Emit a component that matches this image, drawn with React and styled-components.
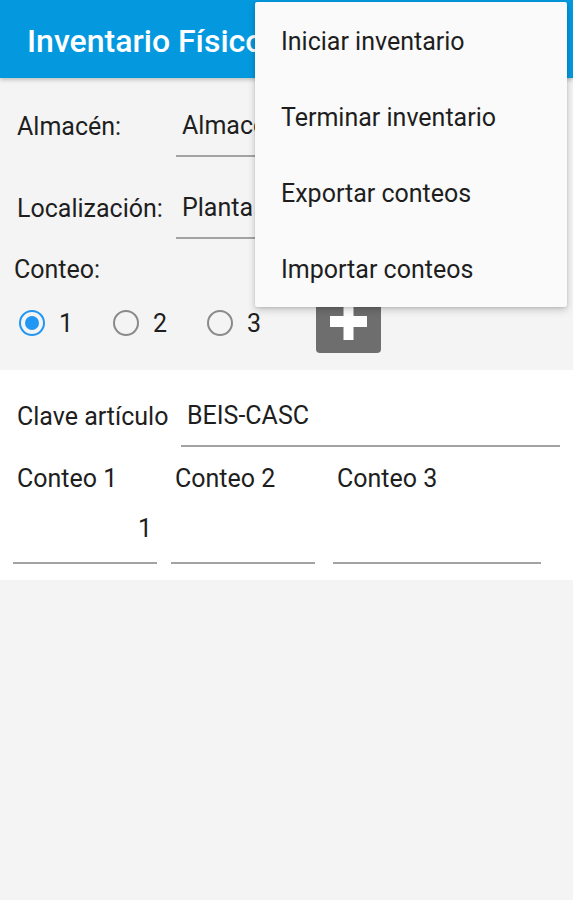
import React from "react";
import styled, { createGlobalStyle } from "styled-components";

const Global = createGlobalStyle`
  html, body { margin: 0; padding: 0; background: #f4f4f4; }
  body { font-family: Roboto, "Noto Sans", sans-serif; -webkit-font-smoothing: antialiased; }
  * { box-sizing: border-box; }
`;

const Screen = styled.div`
  position: relative;
  width: 573px;
  height: 900px;
  background: #f4f4f4;
  overflow: hidden;
`;

const AppBar = styled.header`
  height: 78px;
  background: #0499df;
  display: flex;
  align-items: center;
  padding: 4px 0 0 27px;
  box-shadow: 0 2px 4px rgba(0, 0, 0, 0.22);
  position: relative;
  z-index: 1;
`;

const Title = styled.h1`
  margin: 0;
  color: #fff;
  font-size: 32px;
  font-weight: 500;
  white-space: nowrap;
`;

const Form = styled.section`
  padding-top: 22px;
  height: 292px;
`;

const Row = styled.div`
  display: grid;
  grid-template-columns: ${(p) => p.$labelWidth}px ${(p) => p.$fieldWidth}px;
  padding-left: ${(p) => p.$left}px;
  margin-bottom: ${(p) => p.$gap || 0}px;
`;

const Label = styled.div`
  height: 57px;
  padding-bottom: 5px;
  display: flex;
  align-items: center;
  font-size: 25px;
  color: #1e1e1e;
  white-space: nowrap;
`;

const Field = styled.div`
  height: 57px;
  padding: 0 0 5px 6px;
  display: flex;
  align-items: center;
  font-size: 25px;
  color: #1e1e1e;
  border-bottom: 2px solid #a3a3a3;
  white-space: nowrap;
  overflow: hidden;
`;

const SectionLabel = styled.div`
  padding-left: 14px;
  margin-top: 16px;
  font-size: 25px;
  color: #1e1e1e;
  line-height: 30px;
`;

const RadioRow = styled.div`
  display: flex;
  align-items: center;
  padding-left: 19px;
  height: 76px;
`;

const RadioItem = styled.label`
  display: flex;
  align-items: center;
  gap: 14px;
  width: 94px;
  font-size: 25px;
  color: #1e1e1e;
`;

const RadioCircle = styled.span`
  width: 26px;
  height: 26px;
  border-radius: 50%;
  border: 2px solid ${(p) => (p.$checked ? "#2196f3" : "#8a8a8a")};
  display: flex;
  align-items: center;
  justify-content: center;
  &::after {
    content: "";
    width: 14px;
    height: 14px;
    border-radius: 50%;
    background: ${(p) => (p.$checked ? "#2196f3" : "transparent")};
  }
`;

const AddButton = styled.button`
  margin: -4px 0 0 15px;
  width: 65px;
  height: 64px;
  border: none;
  border-radius: 4px;
  background: #6e6e6e;
  display: flex;
  align-items: center;
  justify-content: center;
  padding: 0;
`;

const Card = styled.section`
  background: #fff;
  height: 210px;
  padding-top: 20px;
`;

const CountLabels = styled.div`
  display: grid;
  grid-template-columns: 158px 162px auto;
  padding-left: 17px;
  margin-top: 17px;
  font-size: 25px;
  color: #1e1e1e;
  line-height: 30px;
`;

const CountInputs = styled.div`
  display: flex;
  padding-left: 13px;
`;

const CountInput = styled.div`
  width: ${(p) => p.$w}px;
  margin-right: ${(p) => p.$mr || 0}px;
  height: 70px;
  padding: 0 5px 18px 0;
  display: flex;
  align-items: flex-end;
  justify-content: flex-end;
  font-size: 25px;
  line-height: 30px;
  color: #1e1e1e;
  border-bottom: 2px solid #a3a3a3;
`;

const Menu = styled.ul`
  position: absolute;
  top: 2px;
  left: 255px;
  width: 312px;
  height: 305px;
  margin: 0;
  padding: 1px 0 0;
  list-style: none;
  background: #fafafa;
  border-radius: 2px;
  box-shadow: 0 3px 8px rgba(0, 0, 0, 0.18), 0 1px 3px rgba(0, 0, 0, 0.12);
  z-index: 5;
`;

const MenuItem = styled.li`
  height: 76px;
  display: flex;
  align-items: center;
  padding-left: 26px;
  font-size: 25px;
  color: #1e1e1e;
  white-space: nowrap;
`;

export default function App() {
  return (
    <>
      <Global />
      <Screen>
        <AppBar>
          <Title>Inventario Físico</Title>
        </AppBar>
        <Form>
          <Row $left={17} $labelWidth={159} $fieldWidth={300} $gap={25}>
            <Label>Almacén:</Label>
            <Field>Almacén General</Field>
          </Row>
          <Row $left={17} $labelWidth={159} $fieldWidth={300}>
            <Label>Localización:</Label>
            <Field>Planta Baja</Field>
          </Row>
          <SectionLabel>Conteo:</SectionLabel>
          <RadioRow>
            <RadioItem>
              <RadioCircle $checked />1
            </RadioItem>
            <RadioItem>
              <RadioCircle />2
            </RadioItem>
            <RadioItem>
              <RadioCircle />3
            </RadioItem>
            <AddButton aria-label="Agregar">
              <svg width="37" height="37" viewBox="0 0 37 37">
                <path d="M13.5 0h10v13h13.5v11H23.5v13h-10V24H0V13h13.5z" fill="#fff" />
              </svg>
            </AddButton>
          </RadioRow>
        </Form>
        <Card>
          <Row $left={17} $labelWidth={164} $fieldWidth={379}>
            <Label>Clave artículo</Label>
            <Field>BEIS-CASC</Field>
          </Row>
          <CountLabels>
            <span>Conteo 1</span>
            <span>Conteo 2</span>
            <span>Conteo 3</span>
          </CountLabels>
          <CountInputs>
            <CountInput $w={144} $mr={14}>1</CountInput>
            <CountInput $w={144} $mr={18} />
            <CountInput $w={208} />
          </CountInputs>
        </Card>
        <Menu>
          <MenuItem>Iniciar inventario</MenuItem>
          <MenuItem>Terminar inventario</MenuItem>
          <MenuItem>Exportar conteos</MenuItem>
          <MenuItem>Importar conteos</MenuItem>
        </Menu>
      </Screen>
    </>
  );
}
